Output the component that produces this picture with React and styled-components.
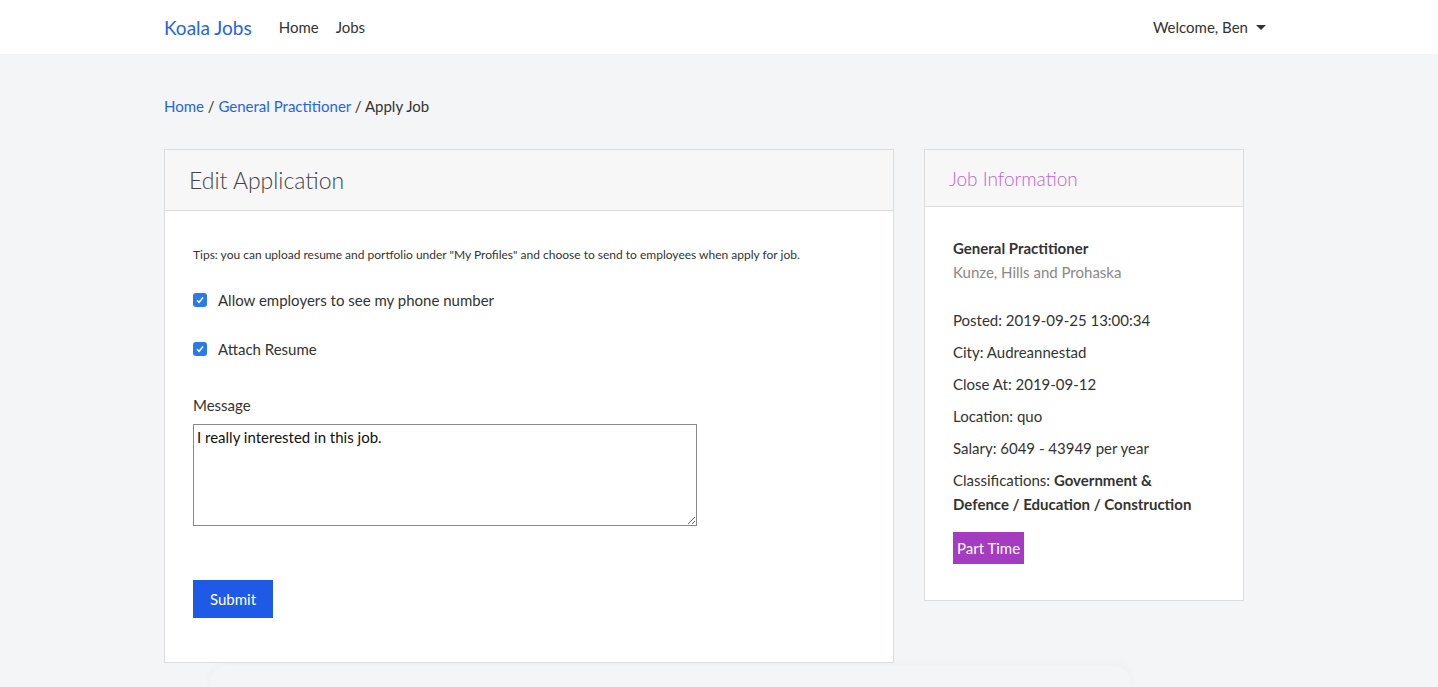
import React from "react";
import styled, { createGlobalStyle } from "styled-components";

const GlobalStyle = createGlobalStyle`
  * { box-sizing: border-box; }
  body {
    margin: 0;
    background: #f4f5f7;
    font-family: Lato, "Noto Sans", sans-serif;
    font-size: 15px;
    color: #333;
  }
`;

const Navbar = styled.nav`
  background: #fff;
  height: 54px;
`;

const Container = styled.div`
  width: 1110px;
  margin: 0 auto;
`;

const NavInner = styled(Container)`
  height: 100%;
  display: flex;
  align-items: center;
`;

const Brand = styled.a`
  color: #2563eb;
  font-size: 19px;
  margin-right: 27px;
  text-decoration: none;
`;

const NavLink = styled.a`
  color: #333;
  text-decoration: none;
  margin-right: 17px;
`;

const UserMenu = styled.div`
  margin-left: auto;
  margin-right: 8px;
  display: flex;
  align-items: center;
  gap: 8px;
  &::after {
    content: "";
    border-top: 5px solid #333;
    border-left: 5px solid transparent;
    border-right: 5px solid transparent;
  }
`;

const Breadcrumb = styled.div`
  padding: 43px 0 34px;
  line-height: 18px;
  a {
    color: #2563eb;
    text-decoration: none;
  }
`;

const Row = styled.div`
  display: flex;
  gap: 30px;
  align-items: flex-start;
`;

const Card = styled.div`
  background: #fff;
  border: 1px solid #ddd;
  width: ${(p) => p.width}px;
`;

const CardHeader = styled.div`
  background: #f7f7f7;
  border-bottom: 1px solid #ddd;
  height: ${(p) => p.height}px;
  padding-left: 24px;
  display: flex;
  align-items: center;
  font-weight: 300;
  font-size: ${(p) => p.size}px;
  color: ${(p) => p.color};
`;

const CardBody = styled.div`
  padding: ${(p) => p.pad};
`;

const Tips = styled.p`
  font-size: 12px;
  margin: 0 0 29px;
`;

const CheckRow = styled.label`
  display: flex;
  align-items: center;
  gap: 11px;
  margin-bottom: 31px;
  line-height: 18px;
`;

const CheckBox = styled.span`
  width: 14px;
  height: 14px;
  border-radius: 3px;
  background: #2a7ae8;
  display: flex;
  align-items: center;
  justify-content: center;
`;

const FieldLabel = styled.div`
  margin: 38px 0 10px;
`;

const TextArea = styled.textarea`
  display: block;
  width: 504px;
  height: 102px;
  border: 1px solid #888;
  padding: 3px 3px;
  font-family: inherit;
  font-size: 15px;
  color: #111;
  resize: vertical;
`;

const Button = styled.button`
  margin-top: 54px;
  width: 80px;
  height: 38px;
  border: none;
  background: #1f5ae6;
  color: #fff;
  font-family: inherit;
  font-size: 15px;
`;

const JobTitle = styled.div`
  font-weight: 700;
  line-height: 24px;
`;

const Company = styled.div`
  color: #888;
  line-height: 24px;
  margin-bottom: 24px;
`;

const InfoLine = styled.div`
  line-height: 24px;
  margin-bottom: 8px;
  max-width: 250px;
  b { font-weight: 700; }
`;

const Badge = styled.span`
  display: inline-block;
  margin-top: 8px;
  background: #a53bc1;
  color: #fff;
  height: 32px;
  line-height: 32px;
  padding: 0 4px;
`;

const FooterShadow = styled.div`
  margin: 3px 0 0 46px;
  width: 920px;
  height: 22px;
  border-radius: 16px 16px 0 0;
  box-shadow: 0 -2px 12px rgba(0, 0, 0, 0.03);
`;

const Check = () => (
  <CheckBox>
    <svg width="10" height="10" viewBox="0 0 10 10">
      <path d="M2 5.2 L4.1 7.3 L8 2.6" fill="none" stroke="#fff" strokeWidth="1.5" />
    </svg>
  </CheckBox>
);

export default function App() {
  return (
    <>
      <GlobalStyle />
      <Navbar>
        <NavInner>
          <Brand href="#">Koala Jobs</Brand>
          <NavLink href="#">Home</NavLink>
          <NavLink href="#">Jobs</NavLink>
          <UserMenu>Welcome, Ben</UserMenu>
        </NavInner>
      </Navbar>
      <Container>
        <Breadcrumb>
          <a href="#">Home</a> / <a href="#">General Practitioner</a> / Apply Job
        </Breadcrumb>
        <Row>
          <Card width={730}>
            <CardHeader height={61} size={23} color="#444">
              Edit Application
            </CardHeader>
            <CardBody pad="36px 28px 44px">
              <Tips>
                Tips: you can upload resume and portfolio under "My Profiles" and choose to send to
                employees when apply for job.
              </Tips>
              <CheckRow>
                <Check />
                Allow employers to see my phone number
              </CheckRow>
              <CheckRow>
                <Check />
                Attach Resume
              </CheckRow>
              <FieldLabel>Message</FieldLabel>
              <TextArea defaultValue="I really interested in this job." />
              <Button>Submit</Button>
            </CardBody>
          </Card>
          <Card width={320}>
            <CardHeader height={57} size={19} color="#bf62d6">
              Job Information
            </CardHeader>
            <CardBody pad="29px 28px 36px">
              <JobTitle>General Practitioner</JobTitle>
              <Company>Kunze, Hills and Prohaska</Company>
              <InfoLine>Posted: 2019-09-25 13:00:34</InfoLine>
              <InfoLine>City: Audreannestad</InfoLine>
              <InfoLine>Close At: 2019-09-12</InfoLine>
              <InfoLine>Location: quo</InfoLine>
              <InfoLine>Salary: 6049 - 43949 per year</InfoLine>
              <InfoLine>
                Classifications: <b>Government &amp; Defence / Education / Construction</b>
              </InfoLine>
              <Badge>Part Time</Badge>
            </CardBody>
          </Card>
        </Row>
        <FooterShadow />
      </Container>
    </>
  );
}
